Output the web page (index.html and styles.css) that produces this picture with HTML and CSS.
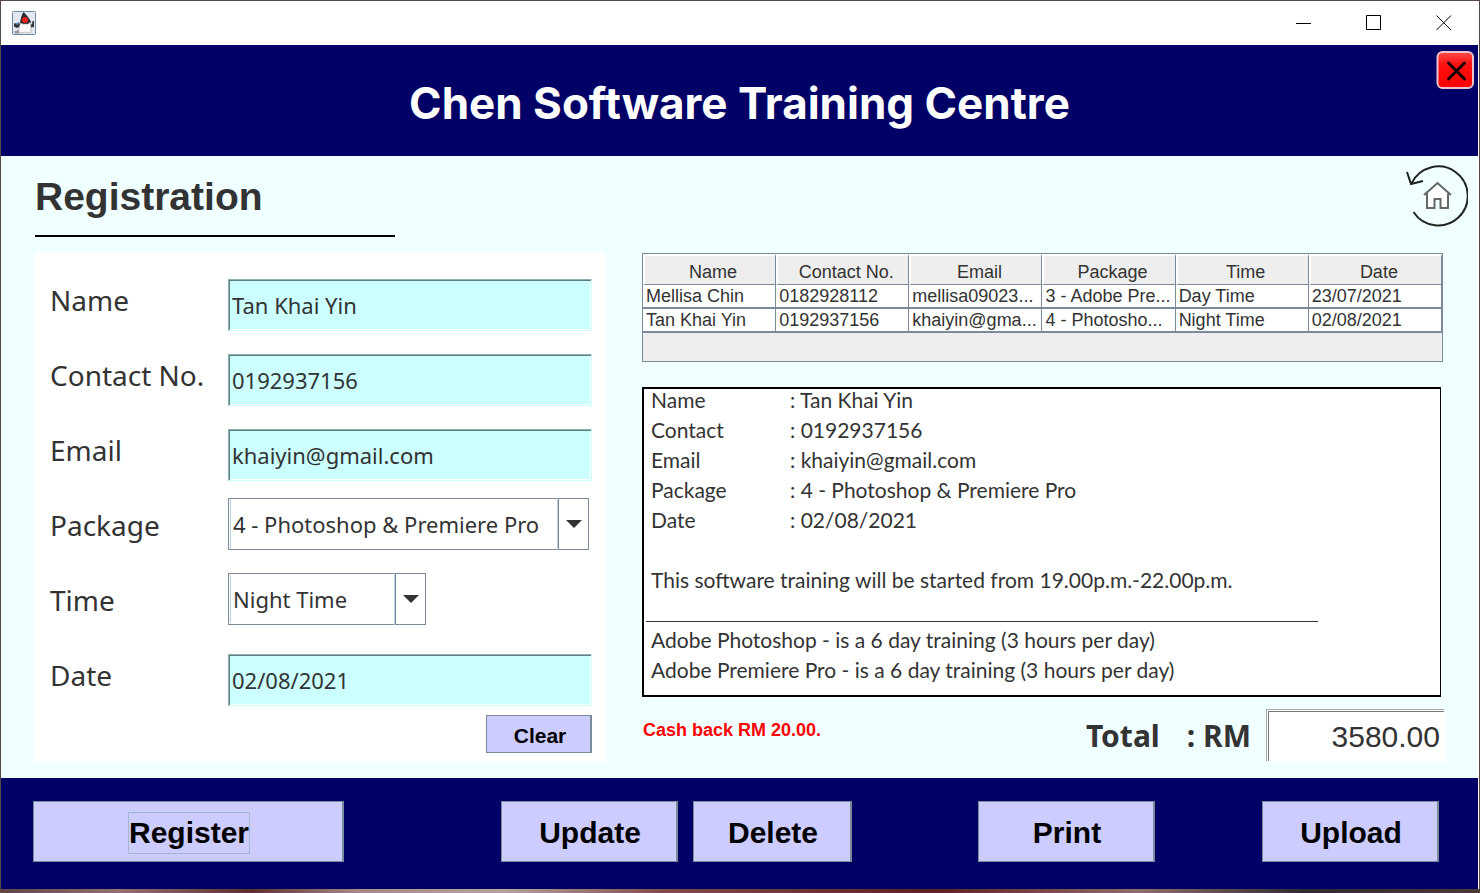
FILE: index.html
```html
<!DOCTYPE html>
<html lang="en">
<head>
<meta charset="utf-8">
<meta name="viewport" content="width=device-width, initial-scale=1">
<title>Chen Software Training Centre</title>
<link rel="stylesheet" href="styles.css">
</head>
<body>
<div class="window">
  <div class="titlebar">
    <svg class="app-icon" viewBox="0 0 24 24" aria-hidden="true">
      <rect x=".5" y=".5" width="23" height="23" rx="1" fill="#e4e7ef" stroke="#6a8aa5"/>
      <path d="M2 20.500L7 19v3.500H3z" fill="#999"/>
      <path d="M7 11.500l-5 1v3l3 1.500 4-2zM18 13l2 .5.5-3.500H22v6l-3 .5z" fill="#333"/>
      <path d="M3 12.500l4-1-1.500 2.500z" fill="#4d9be0"/>
      <path d="M11.500 1C9.500 4 8.500 8 8 12l2 2h7l2-3c-1.500-3-4-7-7.500-10z" fill="#2b2b2b"/>
      <path d="M8.500 12c-1.500 4-2 7-1.500 9.500 2 1 4 0 5.500-.5 2 0 4 1.500 6 .5C19.500 19 19 15 18 11.500L15.500 13h-4z" fill="#fafafa" stroke="#888" stroke-width=".5"/>
      <circle cx="13" cy="9" r="3" fill="#ee1c1c"/>
    </svg>
    <div class="window-controls">
      <button type="button" aria-label="Minimize"><svg viewBox="0 0 16 16"><path d="M0 8.500h15"/></svg></button>
      <button type="button" aria-label="Maximize"><svg viewBox="0 0 16 16"><path d="M.5.5h14v14H.5z"/></svg></button>
      <button type="button" aria-label="Close window"><svg viewBox="0 0 16 16"><path d="M.5.5l14.500 14.500M15 .5L.5 15"/></svg></button>
    </div>
  </div>

  <header class="banner">
    <h1>Chen Software Training Centre</h1>
    <button class="exit" type="button" aria-label="Exit">
      <svg viewBox="0 0 38 38">
        <defs><linearGradient id="red" x2="0" y2="1"><stop offset="0" stop-color="#ff4a4a"/><stop offset=".35" stop-color="#ff1010"/><stop offset="1" stop-color="#f00"/></linearGradient></defs>
        <rect x="1.500" y="1" width="35.500" height="36" rx="5" fill="url(#red)" stroke="#e9c3d0" stroke-width="2"/>
        <path d="M12.500 12l16 16M28.500 12l-16 16" stroke="#160000" stroke-width="3" stroke-linecap="round"/>
      </svg>
    </button>
  </header>

  <main>
    <div class="page-head">
      <h2>Registration</h2>
      <button class="home" type="button" aria-label="Home">
        <svg viewBox="0 0 64 64" fill="none" stroke="#222" stroke-width="2">
          <path d="M7.500 19.500A29.500 29.500 0 1 1 9.500 48"/>
          <path d="M3 8l4 12 12-3"/>
          <path d="M24 31v12.500h6.500V35h6v8.500H43V31l-9.500-10z" fill="#fff" stroke="none"/>
          <path d="M20 31l13.500-12L47 31M23 29.500V44h7.500v-9h6v9H44V29.500" stroke="#666"/>
        </svg>
      </button>
    </div>

    <div class="columns">
      <form class="card" onsubmit="return false">
        <div class="field"><label for="name">Name</label><input id="name" type="text" value="Tan Khai Yin"></div>
        <div class="field"><label for="contact">Contact No.</label><input id="contact" type="text" value="0192937156"></div>
        <div class="field"><label for="email">Email</label><input id="email" type="text" value="khaiyin@gmail.com"></div>
        <div class="field"><label for="package">Package</label>
          <div class="combo combo-wide"><select id="package"><option>4 - Photoshop &amp; Premiere Pro</option></select></div></div>
        <div class="field"><label for="time">Time</label>
          <div class="combo combo-short"><select id="time"><option>Night Time</option></select></div></div>
        <div class="field"><label for="date">Date</label><input id="date" type="text" value="02/08/2021"></div>
        <button class="btn clear" type="button">Clear</button>
      </form>

      <section class="details">
        <div class="table-box">
          <table>
            <thead><tr><th>Name</th><th>Contact No.</th><th>Email</th><th>Package</th><th>Time</th><th>Date</th></tr></thead>
            <tbody>
              <tr><td>Mellisa Chin</td><td>0182928112</td><td>mellisa09023...</td><td>3 - Adobe Pre...</td><td>Day Time</td><td>23/07/2021</td></tr>
              <tr><td>Tan Khai Yin</td><td>0192937156</td><td>khaiyin@gma...</td><td>4 - Photosho...</td><td>Night Time</td><td>02/08/2021</td></tr>
            </tbody>
          </table>
        </div>

        <div class="receipt">
          <dl>
            <dt>Name</dt><dd>: Tan Khai Yin</dd>
            <dt>Contact</dt><dd>: 0192937156</dd>
            <dt>Email</dt><dd>: khaiyin@gmail.com</dd>
            <dt>Package</dt><dd>: 4 - Photoshop &amp; Premiere Pro</dd>
            <dt>Date</dt><dd>: 02/08/2021</dd>
          </dl>
          <p>This software training will be started from 19.00p.m.-22.00p.m.</p>
          <hr>
          <p>Adobe Photoshop - is a 6 day training (3 hours per day)</p>
          <p>Adobe Premiere Pro - is a 6 day training (3 hours per day)</p>
        </div>

        <div class="summary">
          <p class="cashback">Cash back RM 20.00.</p>
          <label class="total" for="total"><span>Total</span><span>: RM</span></label>
          <input id="total" type="text" value="3580.00">
        </div>
      </section>
    </div>
  </main>

  <footer>
    <button class="btn register" type="button"><span>Register</span></button>
    <button class="btn update" type="button">Update</button>
    <button class="btn delete" type="button">Delete</button>
    <button class="btn print" type="button">Print</button>
    <button class="btn upload" type="button">Upload</button>
  </footer>
</div>
<div class="desktop"></div>
</body>
</html>
```

FILE: styles.css
```css
* { box-sizing: border-box; }

:root {
  --navy: #000066;
  --mint: #f0ffff;
  --aqua: #ccffff;
  --lilac: #ccccff;
  --steel: #7a8a99;
  --ink: #333333;
  --ui: "Noto Sans", "Open Sans", sans-serif;
  --arial: "Liberation Sans", Arial, sans-serif;
}

body {
  margin: 0;
  min-height: 100vh;
  display: flex;
  flex-direction: column;
  color: var(--ink);
  font-family: var(--arial);
}

h1, h2, p, dl, dd { margin: 0; }
button, input, select { font: inherit; color: inherit; margin: 0; border-radius: 0; }

.window {
  flex: 1;
  display: flex;
  flex-direction: column;
  border: 1px solid #574848;
  border-bottom: 0;
  background: #fff;
}

.titlebar {
  display: flex;
  justify-content: space-between;
  align-items: center;
  height: 44px;
  padding-left: 11px;
}
.app-icon { width: 24px; height: 24px; }
.window-controls { display: flex; }
.window-controls button {
  width: 70px;
  height: 44px;
  padding: 0;
  border: 0;
  background: none;
}
.window-controls svg {
  display: block;
  width: 16px;
  height: 16px;
  margin: 0 auto;
  fill: none;
  stroke: #000;
}

.banner {
  position: relative;
  display: flex;
  justify-content: center;
  margin-right: 1px;
  padding: 28px 0 23px;
  background: var(--navy);
  color: #fff;
}
h1 {
  font: 700 44px/60px Inter, "Open Sans", sans-serif;
}
.exit {
  position: absolute;
  top: 6px;
  right: 4px;
  padding: 0;
  border: 0;
  background: none;
}
.exit svg { display: block; width: 38px; height: 38px; }

main {
  flex: 1;
  margin-right: 1px;
  padding: 0 35px 16px 34px;
  background: var(--mint);
}
.page-head {
  display: flex;
  justify-content: space-between;
  align-items: flex-start;
  height: 96px;
}
h2 {
  width: 360px;
  padding: 16px 0 13px;
  border-bottom: 2px solid #000;
  font: 700 39px/50px var(--arial);
}
.home {
  margin: 8px -25px 0 0;
  padding: 0;
  border: 0;
  background: none;
}
.home svg { display: block; width: 64px; height: 64px; }

.columns {
  display: grid;
  grid-template-columns: 570fr 801fr;
  gap: 37px;
}

.card {
  display: flex;
  flex-direction: column;
  padding: 12px 13px 9px 15px;
  background: #fff;
}
.field {
  display: grid;
  grid-template-columns: 178px 1fr;
  align-items: start;
  height: 75px;
}
.field label { font: 28px/72px var(--ui); }
.field input {
  width: 100%;
  height: 52px;
  margin-top: 15px;
  padding: 0 3px 0;
  border: 1px solid;
  border-color: #8fb3b3 #ccffff #ccffff #8fb3b3;
  background: var(--aqua);
  box-shadow: inset 1px 1px #5f7f7f, inset -1px -1px #fff;
  font: 22px/30px var(--ui);
}
.combo {
  position: relative;
  margin-top: 9px;
}
.combo-wide { width: 361px; }
.combo-short { width: 198px; }
.combo select {
  display: block;
  width: 100%;
  height: 52px;
  padding: 0 31px 0 4px;
  border: 1px solid var(--steel);
  background: #fff;
  appearance: none;
  box-shadow: inset 0 0 0 1px #fff, inset 2px 1px #b8cfe5, inset 0 -1px #b8cfe5;
  font: 22px/30px var(--ui);
}
.combo::before {
  content: "";
  position: absolute;
  inset: 0 0 0 auto;
  width: 29px;
  border: 1px solid var(--steel);
  background: #fff;
  box-shadow: -1px 0 #b8cfe5;
  pointer-events: none;
}
.combo::after {
  content: "";
  position: absolute;
  top: 22px;
  right: 7px;
  border: 8px solid transparent;
  border-top-color: var(--ink);
  border-bottom: 0;
  pointer-events: none;
}

.btn {
  border: 1px solid var(--steel);
  border-right-width: 2px;
  background: var(--lilac);
  color: #000;
  font: 700 30px/36px var(--arial);
}
.clear {
  align-self: flex-end;
  width: 106px;
  height: 38px;
  margin-top: 1px;
  padding: 3px 0 0 3px;
  font-size: 21px;
  line-height: 26px;
}

.details { display: flex; flex-direction: column; }
.table-box {
  height: 109px;
  margin-top: 1px;
  border: 1px solid var(--steel);
  background: #eee;
}
table {
  width: 100%;
  border-collapse: separate;
  border-spacing: 0;
  table-layout: fixed;
  font: 18px/22px var(--arial);
}
th {
  height: 31px;
  padding: 3px 0 0 6px;
  border: 1px solid #fff;
  border-width: 2px 1px 1px 2px;
  border-bottom-color: var(--steel);
  border-right-color: var(--steel);
  font-weight: 400;
}
td {
  height: 24px;
  padding: 1px 0 0 3px;
  border-right: 1px solid var(--steel);
  border-bottom: 2px solid var(--steel);
  background: #fff;
  line-height: 21px;
  overflow: hidden;
  white-space: nowrap;
}

.receipt {
  height: 310px;
  margin: 25px 2px 0 0;
  padding: 0 8px 0 7px;
  border: 1px solid #000;
  border-width: 2px 1px 2px 2px;
  background: #fff;
  font: 21px/30px Lato, "Noto Sans", sans-serif;
}
.receipt dl {
  display: grid;
  grid-template-columns: 139px 1fr;
  margin: -4px 0 30px;
}
.receipt hr {
  width: 86%;
  height: 30px;
  margin: 0 0 0 -5px;
  border: 0;
  background: linear-gradient(var(--ink), var(--ink)) 0 26px / 100% 1px no-repeat;
}

.summary {
  display: flex;
  align-items: center;
  margin-top: 12px;
  margin-right: -2px;
}
.cashback {
  flex: 1;
  padding: 0 0 12px 1px;
  color: #f00;
  font: 700 18px/22px var(--arial);
}
.total {
  display: flex;
  gap: 27px;
  margin-right: 15px;
  font: 700 30px/52px var(--ui);
}
.summary input {
  width: 179px;
  height: 53px;
  padding: 2px 4px 0;
  border: 1px solid;
  border-color: #aaa #fff #fff #aaa;
  background: #fff;
  box-shadow: inset 1px 1px #fff, inset 2px 2px #777;
  text-align: right;
  font: 30px/36px var(--arial);
}

footer {
  display: grid;
  grid-template-columns: 311fr 157fr 177fr 15fr 159fr 126fr 177fr 107fr 177fr;
  margin-right: 1px;
  padding: 23px 39px 27px 32px;
  background: var(--navy);
}
footer .btn { height: 61px; padding: 3px 0 0 2px; }
.register { grid-column: 1; }
.update { grid-column: 3; }
.delete { grid-column: 5; }
.print { grid-column: 7; }
.upload { grid-column: 9; }
.register span {
  display: inline-block;
  height: 40px;
  padding: 2px 0;
  outline: 1px solid #a3b8cc;
}

.desktop {
  height: 4px;
  background: linear-gradient(90deg, #5c4543, #94716d 8%, #5a2f2a 17%, #a58983 24%, #b5a39b 34%, #7c4c45 45%, #5c211b 63%, #8e6d68 77%, #302b2d 88%, #4d3936);
}
```
